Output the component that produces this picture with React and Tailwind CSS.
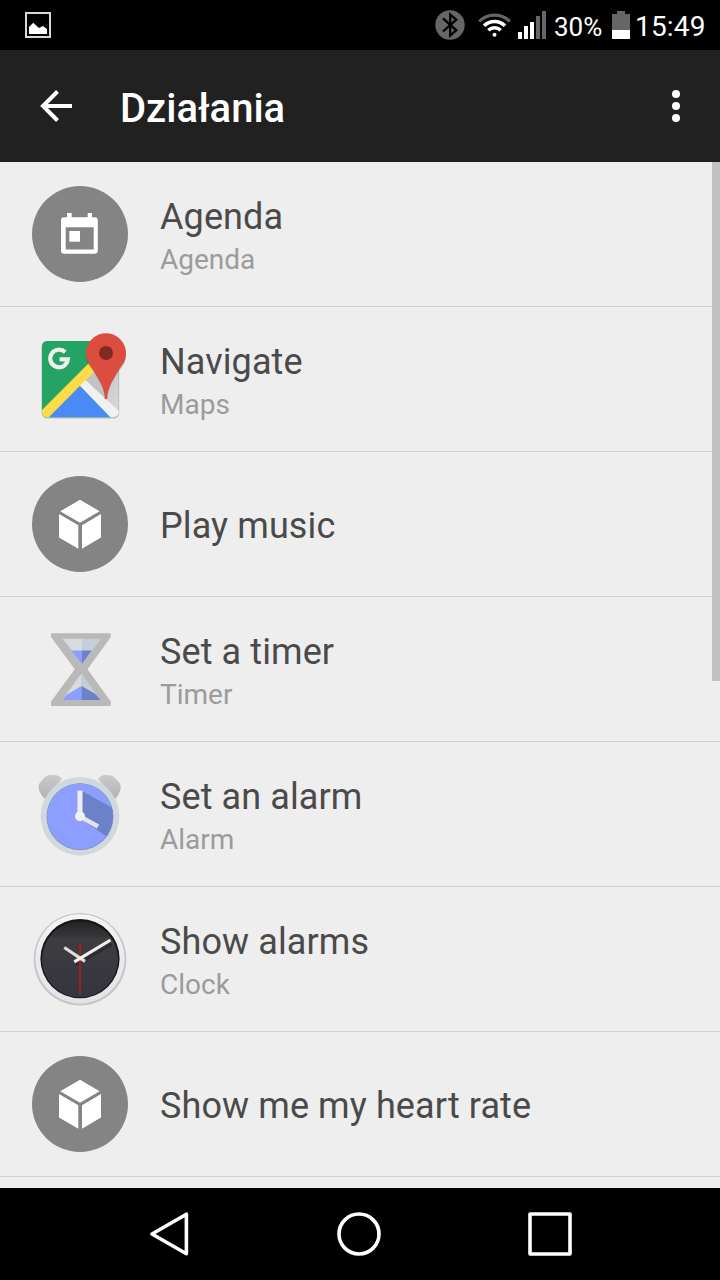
const CubeIcon = () => (
  <svg width="96" height="96" viewBox="0 0 96 96">
    <circle cx="48" cy="48" r="48" fill="#848484" />
    <g fill="#fff">
      <path d="M48 23.7L67.6 35.3L48 46.8L28.2 35.3Z" />
      <path d="M27 38L46.3 49.2V72.7L27 61.6Z" />
      <path d="M69 38L50 49.2V72.7L69 61.6Z" />
    </g>
  </svg>
);

const ICONS = {
  agenda: (
    <svg width="96" height="96" viewBox="0 0 96 96">
      <circle cx="48" cy="48" r="48" fill="#848484" />
      <path
        fill="#fff"
        fillRule="evenodd"
        d="M35 27H39.7V31.3H55.7V27H60V31.3H62.5A3.3 3.3 0 0165.8 34.6V64.4A3.3 3.3 0 0162.5 67.7H32.3A3.3 3.3 0 0129 64.4V34.6A3.3 3.3 0 0132.3 31.3H35ZM33.7 41.3V63.4H61.7V41.3Z"
      />
      <rect x="37.3" y="45" width="10.7" height="10.7" fill="#fff" />
    </svg>
  ),
  maps: (
    <svg width="96" height="96" viewBox="0 0 96 96">
      <defs>
        <clipPath id="tile">
          <rect x="10" y="10" width="76.7" height="76.3" rx="5" />
        </clipPath>
        <linearGradient id="fold" x1="0" y1="0" x2="1" y2="1">
          <stop offset="0.2" stopColor="#b4b4b4" />
          <stop offset="1" stopColor="#dedede" />
        </linearGradient>
      </defs>
      <rect x="9.5" y="10.6" width="77.7" height="77" rx="5.5" fill="#000" opacity="0.18" />
      <g clipPath="url(#tile)">
        <rect x="10" y="10" width="77" height="77" fill="#24a364" />
        <path d="M88 10V87L50 52Z" fill="url(#fold)" />
        <path d="M6 83L66 23L76 30L14.5 91Z" fill="#ffdc45" />
        <path d="M48 54.8L79 86.8H16.3Z" fill="#4a8af4" />
        <path d="M48 54.8L53.8 49L90 83V87H79Z" fill="#f1f1f1" />
        <path d="M53.8 49L63 40L74 68Z" fill="#c2c2c2" />
      </g>
      <path
        d="M33.2 21.2A8.8 8.8 0 1035.8 28.4H27.6"
        fill="none"
        stroke="#efefef"
        strokeWidth="4.2"
      />
      <path
        d="M74 69C73 58 66 46 59.5 37A20 20 0 1188.5 37C82 46 75 58 74 69Z"
        fill="#000"
        opacity="0.2"
        transform="translate(0 1)"
      />
      <path d="M72.8 68C72.8 57 66 46 58 34.3A20 20 0 1190 34.3C82 46 75.2 57 75.2 68Z" fill="#dc4c3f" />
      <circle cx="74" cy="22" r="7" fill="#802a22" />
    </svg>
  ),
  cube: <CubeIcon />,
  timer: (
    <svg width="96" height="96" viewBox="0 0 96 96">
      <path d="M20 12.3H78A1 1 0 0178.8 13.5V16L55.5 48.3L78.8 80.5V84A1 1 0 0178 85H20A1 1 0 0119 84V80.5L42.8 48.3L19 16V13.3A1 1 0 0120 12.3Z" fill="#b9b9b9" />
      <path d="M30.7 17.7H50V42.3Z" fill="#d6dcdf" />
      <path d="M50 17.7H69.3L50 42.8Z" fill="#c6cfd8" />
      <path d="M39.3 29.5H50V42.8Z" fill="#8c9eff" />
      <path d="M50 29.5H59.8L50 42.8Z" fill="#6b82cb" />
      <path d="M49.5 52.3V79H30.2Z" fill="#d6dcdf" />
      <path d="M49.5 52.3L68.5 79H49.5Z" fill="#c6cdd2" />
      <path d="M49.5 65V79H30.2L35 73.5Z" fill="#8c9eff" />
      <path d="M49.5 65L63.5 73L68.5 79H49.5Z" fill="#6b82cb" />
    </svg>
  ),
  alarm: (
    <svg width="96" height="96" viewBox="0 0 96 96">
      <defs>
        <clipPath id="dial">
          <circle cx="48" cy="50.3" r="33" />
        </clipPath>
        <linearGradient id="bell" x1="0" y1="0" x2="0" y2="1">
          <stop offset="0" stopColor="#cacaca" />
          <stop offset="1" stopColor="#b2b2b2" />
        </linearGradient>
      </defs>
      <path d="M13 11Q15.5 9 19 9H22Q27 9 30 13L13 33Q9.5 30 7.3 25Q5.5 20 8 16.5Z" fill="url(#bell)" />
      <path d="M82 11Q79.5 9 76 9H73Q69 9 66 13L83 33Q86 30 88 25Q89.8 20 87.2 16.5Z" fill="url(#bell)" />
      <circle cx="48" cy="50.3" r="39.3" fill="#cfd8dc" />
      <circle cx="48" cy="50.6" r="33.4" fill="#7d8bb5" />
      <g clipPath="url(#dial)">
        <circle cx="48" cy="50.3" r="33" fill="#8c9eff" />
        <path d="M50 25L84 44V77L48 52Z" fill="#6b82cb" />
      </g>
      <path d="M48 50.3V24.7" stroke="#eee" strokeWidth="5" />
      <path d="M48 50.3L66 60.5" stroke="#e4e4e4" strokeWidth="4.4" />
      <circle cx="48" cy="50.3" r="5" fill="#f1f1f1" />
    </svg>
  ),
  clock: (
    <svg width="96" height="96" viewBox="0 0 96 96">
      <defs>
        <linearGradient id="rim" x1="0" y1="0" x2="0" y2="1">
          <stop offset="0" stopColor="#f4f4f4" />
          <stop offset="1" stopColor="#e2e2ea" />
        </linearGradient>
        <linearGradient id="face" x1="0" y1="0" x2="0" y2="1">
          <stop offset="0" stopColor="#222224" />
          <stop offset="0.25" stopColor="#3d3d40" />
          <stop offset="1" stopColor="#36343e" />
        </linearGradient>
      </defs>
      <circle cx="48" cy="48.2" r="46.3" fill="#c6c6c8" />
      <circle cx="48" cy="47.8" r="44.6" fill="url(#rim)" />
      <circle cx="48" cy="47.7" r="39.6" fill="#151518" />
      <circle cx="48" cy="48.3" r="38" fill="url(#face)" />
      <path d="M44 54L80 33" stroke="#222226" strokeWidth="3" opacity="0.6" />
      <path d="M48 32.7V83" stroke="#9c231f" strokeWidth="2" />
      <path d="M53 50.3L32.3 36.5" stroke="#dedede" strokeWidth="3.2" />
      <path d="M42.3 50.8L78.5 29" stroke="#efefef" strokeWidth="3.2" />
    </svg>
  ),
};

const ACTIONS = [
  { title: 'Agenda', app: 'Agenda', icon: 'agenda' },
  { title: 'Navigate', app: 'Maps', icon: 'maps' },
  { title: 'Play music', icon: 'cube' },
  { title: 'Set a timer', app: 'Timer', icon: 'timer' },
  { title: 'Set an alarm', app: 'Alarm', icon: 'alarm' },
  { title: 'Show alarms', app: 'Clock', icon: 'clock' },
  { title: 'Show me my heart rate', icon: 'cube' },
];

function StatusBar() {
  return (
    <div className="h-[50px] shrink-0 bg-black flex items-center pl-[25px] pr-[14px] text-white">
      <svg width="26" height="26" viewBox="0 0 26 26">
        <rect x="1" y="1" width="24" height="24" fill="none" stroke="#d4d8d6" strokeWidth="2" />
        <path d="M4 22V15L8.3 10.7L14 16L18 14L22 17V22Z" fill="#fff" />
      </svg>
      <svg className="ml-auto" width="30" height="30" viewBox="0 0 30 30">
        <circle cx="15" cy="15" r="14.7" fill="#666" />
        <path d="M8 8.3L21.3 20.3L15.2 25.5V4.5L21.3 9.7L8 21.5" fill="none" stroke="#000" strokeWidth="2.3" />
      </svg>
      <svg className="ml-[13px]" width="33" height="24" viewBox="0 0 33 24" fill="none" strokeWidth="3.2">
        <path d="M1.2 8.5A21.5 21.5 0 0131.8 8.5" stroke="#666" />
        <path d="M6 12.8A14.8 14.8 0 0127 12.8" stroke="#fff" strokeWidth="3.6" />
        <path d="M10.3 17.3A8.8 8.8 0 0122.7 17.3" stroke="#fff" strokeWidth="3.4" />
        <circle cx="16.5" cy="21.8" r="2" fill="#fff" />
      </svg>
      <svg className="ml-[7px]" width="28" height="28" viewBox="0 0 28 28">
        <g fill="#fff">
          <rect y="21" width="4" height="7" />
          <rect x="6" y="15" width="4" height="13" />
          <rect x="12" y="11" width="4" height="17" />
        </g>
        <g fill="#666">
          <rect x="18" y="5" width="4" height="23" />
          <rect x="24" width="4" height="28" />
        </g>
      </svg>
      <span className="ml-2 text-[26px] leading-[30px] w-[50px] whitespace-nowrap mt-1">30%</span>
      <svg className="ml-2" width="18" height="28" viewBox="0 0 18 28">
        <path d="M5 0H13V3H18V19H0V3H5Z" fill="#666" />
        <rect y="19" width="18" height="9" fill="#fff" />
      </svg>
      <span className="ml-[5px] text-[28px] leading-[34px] mt-1 w-[71px] whitespace-nowrap tracking-[0.2px]">15:49</span>
    </div>
  );
}

function AppBar() {
  return (
    <header className="h-[112px] shrink-0 bg-[#212121] border-b border-[#1a1a1a] flex items-center pl-10 pr-[38px] text-white">
      <svg width="32" height="32" viewBox="0 0 32 32" fill="none" stroke="#fff" strokeWidth="4">
        <path d="M17.5 1.5L3 16L17.5 30.5" />
        <path d="M3 16H32" />
      </svg>
      <h1 className="ml-12 mt-[7px] text-[40px] leading-[48px] font-medium">Działania</h1>
      <svg className="ml-auto" width="12" height="32" viewBox="0 0 12 32" fill="#fff">
        <circle cx="6" cy="4" r="4" />
        <circle cx="6" cy="16" r="4" />
        <circle cx="6" cy="28" r="4" />
      </svg>
    </header>
  );
}

function ActionRow({ action }) {
  return (
    <li className="h-[145px] shrink-0 flex items-center gap-8 px-8 border-b border-[#cfcfcf]">
      {ICONS[action.icon]}
      <div className="flex flex-col gap-[5px] pt-1">
        <div className="text-[36px] leading-[42px] tracking-[0.1px] text-[#4a4a4a]">{action.title}</div>
        {action.app && <div className="text-[28px] leading-[34px] text-[#9b9b9b]">{action.app}</div>}
      </div>
    </li>
  );
}

function NavBar() {
  return (
    <nav className="h-[92px] shrink-0 bg-black flex items-center pl-[149px] pr-[148px] justify-between">
      <svg width="40" height="46" viewBox="0 0 40 46" fill="none" stroke="#fff" strokeWidth="3.6">
        <path d="M37.4 3.2V42.8L3 23Z" strokeLinejoin="round" />
      </svg>
      <svg width="44" height="44" viewBox="0 0 44 44" fill="none" stroke="#fff" strokeWidth="3.6">
        <circle cx="22" cy="22" r="20" />
      </svg>
      <svg width="44" height="44" viewBox="0 0 44 44" fill="none" stroke="#fff" strokeWidth="3.6">
        <rect x="2" y="2" width="40" height="40" strokeLinejoin="round" />
      </svg>
    </nav>
  );
}

export default function App() {
  return (
    <div className="w-[720px] h-[1280px] flex flex-col overflow-hidden font-['Roboto',sans-serif]">
      <StatusBar />
      <AppBar />
      <main className="relative flex-1 min-h-0 overflow-hidden bg-[#eeeeee]">
        <ul className="flex flex-col">
          {ACTIONS.map((action) => (
            <ActionRow key={action.title} action={action} />
          ))}
        </ul>
        <div className="absolute right-0 top-0 w-2 h-[519px] bg-[#c1c1c1]" />
      </main>
      <NavBar />
    </div>
  );
}
